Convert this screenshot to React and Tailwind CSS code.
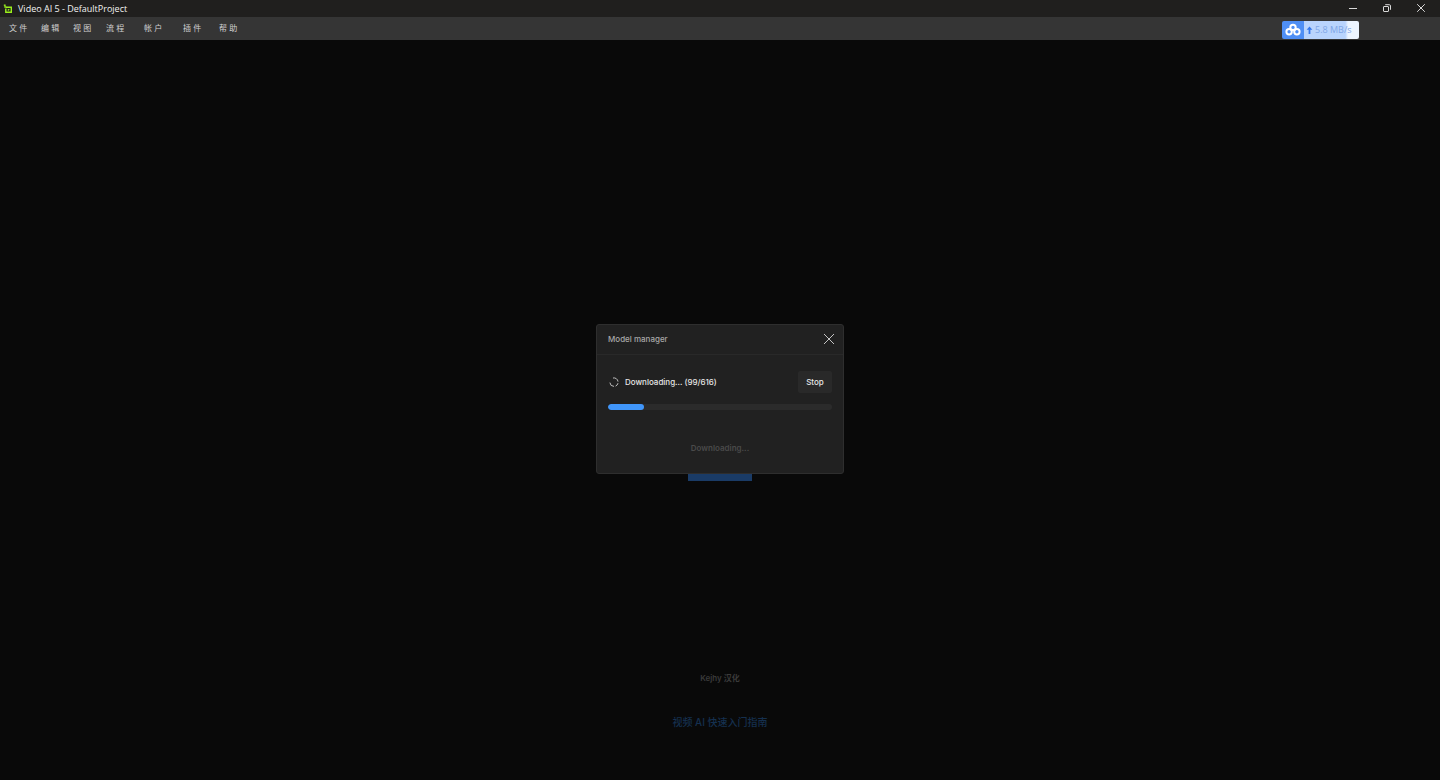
import React, { useState } from 'react';

const MENUS = [
  { label: '文 件', width: 'w-[32px]' },
  { label: '编 辑', width: 'w-[32px]' },
  { label: '视 图', width: 'w-[33px]' },
  { label: '流 程', width: 'w-[38px]' },
  { label: '帐 户', width: 'w-[39px]' },
  { label: '插 件', width: 'w-[36px]' },
  { label: '帮 助', width: 'w-[32px]' },
];

const AppLogo = () => (
  <svg viewBox="0 0 10 10" className="w-[10px] h-[10px]" fill="none" stroke="#9bf01c">
    <path d="M3 3.3H8.3V8.3H2.8V4.5" strokeWidth="1.4" />
    <path d="M0.8 1.2H2V3.2H3.4" strokeWidth="1.3" />
    <path d="M4.8 4.7L6.9 5.8L4.8 6.9Z" fill="#9bf01c" stroke="none" />
  </svg>
);

const TitleBar = () => (
  <header className="flex items-center justify-between h-[17px] bg-[#201f1e] pl-[3px] pr-[14px]">
    <div className="flex items-center gap-[5px]">
      <AppLogo />
      <h1 className="font-['Open_Sans','Noto_Sans',sans-serif] text-[9px] leading-[12px] text-[#f2f2f2]">
        Video AI 5 - DefaultProject
      </h1>
    </div>
    <div className="flex items-center gap-6 pb-[2px] text-[#d8d8d8]">
      <button aria-label="Minimize" className="w-[10px] h-[10px]">
        <svg viewBox="0 0 10 10" stroke="currentColor">
          <path d="M1 5.5H9" />
        </svg>
      </button>
      <button aria-label="Restore" className="w-[10px] h-[10px]">
        <svg viewBox="0 0 10 10" fill="none" stroke="currentColor">
          <rect x="1.5" y="3.5" width="5" height="5" rx="0.5" />
          <path d="M3.2 1.7H7.3Q8.5 1.7 8.5 2.9V6.8" />
        </svg>
      </button>
      <button aria-label="Close" className="w-[10px] h-[10px]">
        <svg viewBox="0 0 10 10" fill="none" stroke="currentColor">
          <path d="M1.2 1.2L8.8 8.8M8.8 1.2L1.2 8.8" />
        </svg>
      </button>
    </div>
  </header>
);

const UploadBadge = () => (
  <div className="flex h-[18px] w-[77px] rounded-[2px] overflow-hidden">
    <div className="flex items-center justify-center w-[22px] bg-[#4f8ff5]">
      <svg viewBox="0 0 16 14" className="w-[16px] h-[14px]" fill="none" stroke="#fff" strokeWidth="2">
        <circle cx="8" cy="4.4" r="2.7" />
        <circle cx="4.1" cy="8.8" r="2.7" />
        <circle cx="11.9" cy="8.8" r="2.7" />
      </svg>
    </div>
    <div className="flex flex-1 items-center gap-[2px] pl-[2px] bg-linear-to-r from-[#b9d4fd] from-75% to-[#edf5ff] to-80%">
      <svg viewBox="0 0 7 9" className="w-[7px] h-[9px]">
        <path d="M3.5 0.5L6.4 3.8H4.4V8H2.6V3.8H0.6Z" fill="#3577ea" />
      </svg>
      <span className="font-['Open_Sans',sans-serif] text-[9px] leading-[12px] text-[#7fa6e6] whitespace-nowrap">5.8 MB/s</span>
    </div>
  </div>
);

const MenuBar = () => (
  <nav className="flex items-center justify-between h-[23px] bg-[#353535] pl-[9px] pr-[81px]">
    <div className="flex">
      {MENUS.map((menu) => (
        <button
          key={menu.label}
          className={`${menu.width} text-left whitespace-nowrap font-['Liberation_Sans','Noto_Sans_CJK_SC',sans-serif] text-[8px] leading-[12px] text-[#cfcfcf]`}
        >
          {menu.label}
        </button>
      ))}
    </div>
    <div className="pt-[3px]">
      <UploadBadge />
    </div>
  </nav>
);

const ModelManager = ({ done, total, onClose }) => (
  <div role="dialog" aria-labelledby="manager-title" className="w-[248px] rounded-[3px] border border-[#2e2e2e] bg-[#212121]">
    <div className="flex items-center justify-between h-[30px] border-b border-[#292929] pl-[11px] pr-2 pb-px">
      <h2 id="manager-title" className="text-[8px] leading-[12px] font-medium text-[#a8a8a8]">Model manager</h2>
      <button aria-label="Close" onClick={onClose} className="w-[12px] h-[12px] text-[#c4c4c4]">
        <svg viewBox="0 0 12 12" fill="none" stroke="currentColor">
          <path d="M1 1L11 11M11 1L1 11" />
        </svg>
      </button>
    </div>
    <div className="px-[11px] pt-4 pb-[19px]">
      <div className="flex items-center justify-between h-[22px]">
        <div className="flex items-center gap-[6px] pl-px">
          <svg viewBox="0 0 10 10" className="w-[10px] h-[10px]" fill="none" stroke="#bdbdbd">
            <path d="M4 1A4.1 4.1 0 0 1 9 4.6" />
            <path d="M9 6.2A4.1 4.1 0 0 1 6.6 9.1" />
            <path d="M5 9.4A4.2 4.2 0 0 1 0.9 5.6" />
          </svg>
          <p className="text-[8px] leading-[12px] font-medium text-[#e6e6e6]">
            Downloading... ({done}/{total})
          </p>
        </div>
        <button className="w-[34px] h-[22px] rounded-[2px] bg-[#292929] text-[8px] leading-[12px] font-medium text-[#e6e6e6]">
          Stop
        </button>
      </div>
      <div
        role="progressbar"
        aria-label="Download progress"
        aria-valuenow={done}
        aria-valuemax={total}
        className="mt-[11px] h-[6px] rounded-full bg-[#2b2b2b] overflow-hidden"
      >
        <div className="h-full rounded-full bg-[#4096fa]" style={{ width: `${(done / total) * 100}%` }}></div>
      </div>
      <p className="mt-8 text-center text-[8px] leading-[12px] font-semibold text-[#4a4a4a]">Downloading...</p>
    </div>
  </div>
);

const App = () => {
  const [managerOpen, setManagerOpen] = useState(true);

  return (
    <div className="flex flex-col h-screen bg-[#090909] font-['Inter','Noto_Sans_CJK_SC',sans-serif]">
      <TitleBar />
      <div className="relative flex flex-col flex-1">
        <MenuBar />
        <main className="flex flex-col flex-1 items-center">
          <div className="flex flex-1 items-center pt-[226px]">
            <button aria-label="Open" className="w-[64px] h-[24px] bg-[#1a3b66]"></button>
          </div>
          <p className="text-[8px] leading-[12px] font-semibold text-[#3a3a3a]">Kejhy 汉化</p>
          <a href="#guide" className="mt-8 mb-[52px] text-[10px] leading-[12px] font-medium text-[#15304f]">
            视频 AI 快速入门指南
          </a>
        </main>
        {managerOpen && (
          <div className="absolute inset-0 flex items-center justify-center">
            <ModelManager done={99} total={616} onClose={() => setManagerOpen(false)} />
          </div>
        )}
      </div>
    </div>
  );
};

export default App;
